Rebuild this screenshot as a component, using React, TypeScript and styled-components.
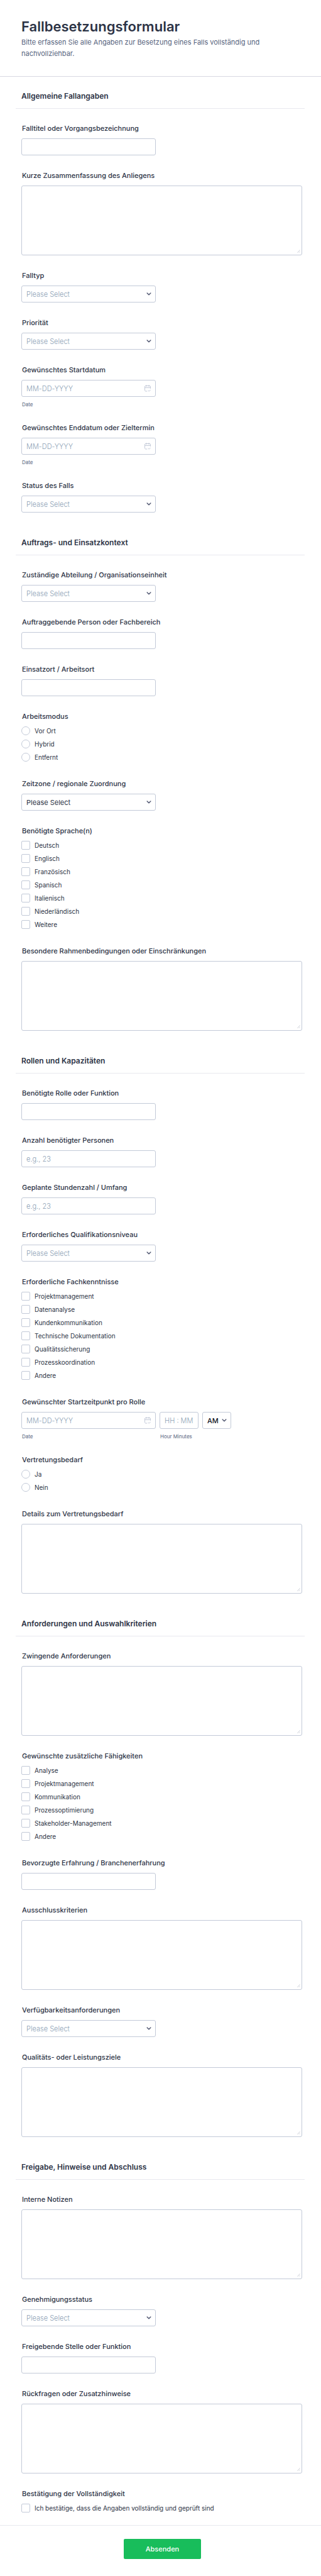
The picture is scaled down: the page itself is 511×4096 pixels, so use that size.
import React, { useId } from "react";
import styled, { createGlobalStyle } from "styled-components";

const ink = "#2c3345";
const line = "#c3cad8";
const muted = "#57647e";
const faint = "#8d9fb5";

const GlobalStyle = createGlobalStyle`
  * { box-sizing: border-box; }
  body {
    margin: 0;
    background: #fff;
    color: ${ink};
    font-family: Inter, "Liberation Sans", sans-serif;
    font-size: 11px;
  }
`;

const Header = styled.header`
  padding: 28px 30px 27px 34px;
  border-bottom: 1px solid #d7d8e1;
`;

const Title = styled.h1`
  margin: 0;
  font-size: 22px;
  line-height: 28px;
  font-weight: 600;
`;

const Subtitle = styled.p`
  margin: 2px 0 0;
  max-width: 400px;
  font-size: 11px;
  line-height: 18px;
  font-weight: 400;
  color: ${muted};
`;

const Section = styled.section`
  padding: 21px 26px 17px 25px;
`;

const SectionTitle = styled.h2`
  margin: 0;
  padding: 0 9px 9px;
  border-bottom: 1px solid #e8e9ef;
  font-size: 12px;
  line-height: 20px;
  font-weight: 600;
`;

const FieldList = styled.div`
  display: flex;
  flex-direction: column;
  gap: 24px;
  padding: 23px 4px 0 9px;
`;

const FieldBox = styled.div`
  display: flex;
  flex-direction: column;
  gap: 8px;
`;

const FieldSet = styled.fieldset`
  min-width: 0;
  margin: 0;
  padding: 0 0 3px;
  border: 0;
`;

const Label = styled.label`
  padding-left: 1px;
  font-size: 11px;
  line-height: 16px;
  font-weight: 500;
`;

const Legend = styled.legend`
  padding: 0 0 8px 1px;
  font-size: 11px;
  line-height: 16px;
  font-weight: 500;
`;

const Control = styled.div<{ $width?: number }>`
  position: relative;
  width: ${(p) => p.$width ?? 214}px;
  max-width: 100%;
`;

const TextInput = styled.input`
  display: block;
  width: 100%;
  height: 27px;
  padding: 0 7px;
  border: 1px solid ${line};
  border-radius: 3px;
  background: #fff;
  color: ${ink};
  font: 400 11px/16px Inter, "Liberation Sans", sans-serif;
  &::placeholder {
    color: ${faint};
    font-weight: 300;
    opacity: 1;
  }
`;

const SelectInput = styled.select<{ $tone: "faint" | "ink" | "strong" }>`
  display: block;
  width: 100%;
  height: 27px;
  padding: 0 18px 0 7px;
  border: 1px solid ${line};
  border-radius: 3px;
  appearance: none;
  background: #fff;
  color: ${(p) => (p.$tone === "faint" ? faint : p.$tone === "ink" ? ink : "#111426")};
  font: 400 11px/16px Inter, "Liberation Sans", sans-serif;
  font-weight: ${(p) => (p.$tone === "faint" ? 300 : p.$tone === "ink" ? 400 : 500)};
`;

const TextArea = styled.textarea`
  display: block;
  width: 100%;
  height: 111px;
  padding: 6px 7px;
  border: 1px solid ${line};
  border-radius: 3px;
  resize: none;
  background: #fff;
  color: ${ink};
  font: 400 11px/16px Inter, "Liberation Sans", sans-serif;
`;

const AreaWrap = styled.div`
  position: relative;
`;

const Grip = styled.svg`
  position: absolute;
  right: 3px;
  bottom: 4px;
  width: 5px;
  height: 5px;
  pointer-events: none;
`;

const Chevron = styled.svg`
  position: absolute;
  top: 10px;
  right: 7px;
  width: 8px;
  height: 7px;
  pointer-events: none;
`;

const CalendarButton = styled.button`
  position: absolute;
  top: 8px;
  right: 8px;
  width: 10px;
  height: 11px;
  padding: 0;
  border: 0;
  background: none;
  svg { display: block; }
`;

const SubLabel = styled.label`
  display: block;
  padding: 7px 0 0 1px;
  font-size: 8px;
  line-height: 10px;
  color: ${muted};
`;

const TimeRow = styled.div`
  display: flex;
  flex-wrap: wrap;
  gap: 6px;
`;

const Options = styled.div`
  display: flex;
  flex-direction: column;
  gap: 7px;
`;

const OptionLabel = styled.label`
  display: flex;
  align-items: center;
  gap: 7px;
  font-size: 10px;
  line-height: 14px;
`;

const Tick = styled.input`
  appearance: none;
  flex: none;
  width: 14px;
  height: 14px;
  margin: 0;
  border: 1px solid ${line};
  border-radius: ${(p) => (p.type === "radio" ? "50%" : "2px")};
  background: #fff;
`;

const Footer = styled.footer`
  display: flex;
  justify-content: center;
  padding: 21px 0 27px 6px;
  border-top: 1px solid #e8e9ef;
`;

const Submit = styled.button`
  width: 123px;
  height: 32px;
  padding: 0;
  border: 0;
  border-radius: 2px;
  background: #18bd5b;
  color: #fff;
  font: 500 11px/16px Inter, "Liberation Sans", sans-serif;
`;

function ChevronIcon() {
  return (
    <Chevron viewBox="0 0 8 7" aria-hidden="true">
      <path d="M1.2 2 4 4.8 6.8 2" fill="none" stroke="#535a73" strokeWidth="1.5" strokeLinecap="round" strokeLinejoin="round" />
    </Chevron>
  );
}

function TextField({ label, placeholder }: { label: string; placeholder?: string }) {
  const id = useId();
  return (
    <FieldBox>
      <Label htmlFor={id}>{label}</Label>
      <Control>
        <TextInput id={id} placeholder={placeholder} />
      </Control>
    </FieldBox>
  );
}

function AreaField({ label }: { label: string }) {
  const id = useId();
  return (
    <FieldBox>
      <Label htmlFor={id}>{label}</Label>
      <AreaWrap>
        <TextArea id={id} />
        <Grip viewBox="0 0 5 5" aria-hidden="true">
          <path d="M.3 4.7 4.7.3M2.8 4.7 4.7 2.8" stroke="#b9bdc9" strokeWidth=".7" />
        </Grip>
      </AreaWrap>
    </FieldBox>
  );
}

function SelectField({ label, tone = "faint" }: { label: string; tone?: "faint" | "ink" }) {
  const id = useId();
  return (
    <FieldBox>
      <Label htmlFor={id}>{label}</Label>
      <Control>
        <SelectInput id={id} $tone={tone}>
          <option>Please Select</option>
        </SelectInput>
        <ChevronIcon />
      </Control>
    </FieldBox>
  );
}

function DateControl({ id }: { id: string }) {
  return (
    <div>
      <Control>
        <TextInput id={id} placeholder="MM-DD-YYYY" />
        <CalendarButton type="button" aria-label="Kalender">
          <svg width="10" height="11" viewBox="0 0 20 22" fill="none" stroke="#c3cad8" strokeWidth="2" strokeLinecap="round" strokeLinejoin="round">
            <path d="M8 20H4a3 3 0 0 1-3-3V6a3 3 0 0 1 3-3h12a3 3 0 0 1 3 3v5M1 9h18M6 1v4M14 1v4M12 18l2.500 2.500L19 16" />
          </svg>
        </CalendarButton>
      </Control>
      <SubLabel htmlFor={id}>Date</SubLabel>
    </div>
  );
}

function DateField({ label }: { label: string }) {
  const id = useId();
  return (
    <FieldBox>
      <Label htmlFor={id}>{label}</Label>
      <DateControl id={id} />
    </FieldBox>
  );
}

function DateTimeField({ label }: { label: string }) {
  const id = useId();
  return (
    <FieldBox>
      <Label htmlFor={id}>{label}</Label>
      <TimeRow>
        <DateControl id={id} />
        <div>
          <Control $width={62}>
            <TextInput id={id + "time"} placeholder="HH : MM" />
          </Control>
          <SubLabel htmlFor={id + "time"}>Hour Minutes</SubLabel>
        </div>
        <Control $width={46}>
          <SelectInput $tone="strong" aria-label="AM/PM">
            <option>AM</option>
            <option>PM</option>
          </SelectInput>
          <ChevronIcon />
        </Control>
      </TimeRow>
    </FieldBox>
  );
}

function ChoiceField({ label, type = "checkbox", options }: { label: string; type?: "checkbox" | "radio"; options: string[] }) {
  const name = useId();
  return (
    <FieldSet>
      <Legend>{label}</Legend>
      <Options>
        {options.map((o) => (
          <OptionLabel key={o}>
            <Tick type={type} name={name} value={o} />
            {o}
          </OptionLabel>
        ))}
      </Options>
    </FieldSet>
  );
}

function FormSection({ title, children }: { title: string; children: React.ReactNode }) {
  return (
    <Section>
      <SectionTitle>{title}</SectionTitle>
      <FieldList>{children}</FieldList>
    </Section>
  );
}

export default function App() {
  return (
    <>
      <GlobalStyle />
      <form onSubmit={(e) => e.preventDefault()}>
        <Header>
          <Title>Fallbesetzungsformular</Title>
          <Subtitle>Bitte erfassen Sie alle Angaben zur Besetzung eines Falls vollständig und nachvollziehbar.</Subtitle>
        </Header>

        <FormSection title="Allgemeine Fallangaben">
          <TextField label="Falltitel oder Vorgangsbezeichnung" />
          <AreaField label="Kurze Zusammenfassung des Anliegens" />
          <SelectField label="Falltyp" />
          <SelectField label="Priorität" />
          <DateField label="Gewünschtes Startdatum" />
          <DateField label="Gewünschtes Enddatum oder Zieltermin" />
          <SelectField label="Status des Falls" />
        </FormSection>

        <FormSection title="Auftrags- und Einsatzkontext">
          <SelectField label="Zuständige Abteilung / Organisationseinheit" />
          <TextField label="Auftraggebende Person oder Fachbereich" />
          <TextField label="Einsatzort / Arbeitsort" />
          <ChoiceField label="Arbeitsmodus" type="radio" options={["Vor Ort", "Hybrid", "Entfernt"]} />
          <SelectField label="Zeitzone / regionale Zuordnung" tone="ink" />
          <ChoiceField
            label="Benötigte Sprache(n)"
            options={["Deutsch", "Englisch", "Französisch", "Spanisch", "Italienisch", "Niederländisch", "Weitere"]}
          />
          <AreaField label="Besondere Rahmenbedingungen oder Einschränkungen" />
        </FormSection>

        <FormSection title="Rollen und Kapazitäten">
          <TextField label="Benötigte Rolle oder Funktion" />
          <TextField label="Anzahl benötigter Personen" placeholder="e.g., 23" />
          <TextField label="Geplante Stundenzahl / Umfang" placeholder="e.g., 23" />
          <SelectField label="Erforderliches Qualifikationsniveau" />
          <ChoiceField
            label="Erforderliche Fachkenntnisse"
            options={[
              "Projektmanagement",
              "Datenanalyse",
              "Kundenkommunikation",
              "Technische Dokumentation",
              "Qualitätssicherung",
              "Prozesskoordination",
              "Andere",
            ]}
          />
          <DateTimeField label="Gewünschter Startzeitpunkt pro Rolle" />
          <ChoiceField label="Vertretungsbedarf" type="radio" options={["Ja", "Nein"]} />
          <AreaField label="Details zum Vertretungsbedarf" />
        </FormSection>

        <FormSection title="Anforderungen und Auswahlkriterien">
          <AreaField label="Zwingende Anforderungen" />
          <ChoiceField
            label="Gewünschte zusätzliche Fähigkeiten"
            options={["Analyse", "Projektmanagement", "Kommunikation", "Prozessoptimierung", "Stakeholder-Management", "Andere"]}
          />
          <TextField label="Bevorzugte Erfahrung / Branchenerfahrung" />
          <AreaField label="Ausschlusskriterien" />
          <SelectField label="Verfügbarkeitsanforderungen" />
          <AreaField label="Qualitäts- oder Leistungsziele" />
        </FormSection>

        <FormSection title="Freigabe, Hinweise und Abschluss">
          <AreaField label="Interne Notizen" />
          <SelectField label="Genehmigungsstatus" />
          <TextField label="Freigebende Stelle oder Funktion" />
          <AreaField label="Rückfragen oder Zusatzhinweise" />
          <ChoiceField label="Bestätigung der Vollständigkeit" options={["Ich bestätige, dass die Angaben vollständig und geprüft sind"]} />
        </FormSection>

        <Footer>
          <Submit type="submit">Absenden</Submit>
        </Footer>
      </form>
    </>
  );
}
